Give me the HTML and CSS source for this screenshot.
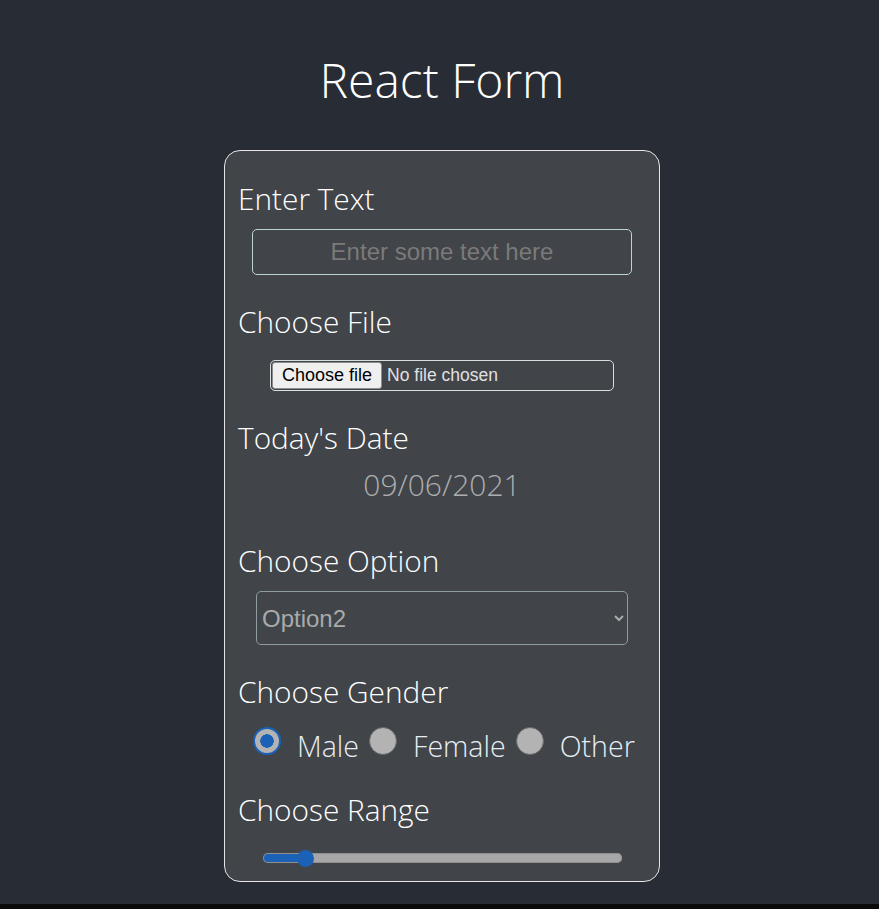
FILE: index.html
```html
<!DOCTYPE html>
<html lang="en">
<head>
<meta charset="utf-8">
<title>React Form</title>
<link rel="stylesheet" href="styles.css">
</head>
<body>
<div class="app">
  <h1 class="title">React Form</h1>
  <form class="card">
    <div class="field first">
      <label class="label" for="txt">Enter Text</label>
      <input id="txt" class="text-input" type="text" placeholder="Enter some text here">
    </div>
    <div class="field">
      <label class="label" for="file">Choose File</label>
      <label class="file-input" for="file">
        <span class="file-button">Choose file</span>
        <span class="file-name">No file chosen</span>
        <input id="file" class="file-hidden" type="file">
      </label>
    </div>
    <div class="field">
      <label class="label">Today's Date</label>
      <div class="date">09/06/2021</div>
    </div>
    <div class="field after-date">
      <label class="label">Choose Option</label>
      <select class="select">
        <option>Option1</option>
        <option selected>Option2</option>
        <option>Option3</option>
      </select>
    </div>
    <div class="field">
      <label class="label">Choose Gender</label>
      <div class="radios">
        <input class="radio" type="radio" name="g" id="m" checked>
        <label class="radio-label" for="m">Male</label>
        <input class="radio" type="radio" name="g" id="f">
        <label class="radio-label" for="f">Female</label>
        <input class="radio" type="radio" name="g" id="o">
        <label class="radio-label" for="o">Other</label>
      </div>
    </div>
    <div class="field after-radios">
      <label class="label">Choose Range</label>
      <input class="range" type="range" min="0" max="100" value="10">
    </div>
  </form>
</div>
</body>
</html>
```

FILE: styles.css
```css
html {
  background: #0a0a0a;
}
body {
  margin: 0;
  font-family: "Open Sans", "Noto Sans", sans-serif;
  font-weight: 300;
  color: #ffffff;
}
.app {
  background: #282c34;
  padding: 52px 0 22px 5px;
  display: flex;
  flex-direction: column;
  align-items: center;
}
.title {
  margin: 0 0 42px;
  font-size: 48px;
  line-height: 56px;
  font-weight: 300;
  color: #ffffff;
}
.card {
  box-sizing: border-box;
  width: 436px;
  background: #414448;
  border: 1px solid #e6e6e6;
  border-radius: 16px;
  padding: 30px 13px 14px;
  display: flex;
  flex-direction: column;
}
.field {
  display: flex;
  flex-direction: column;
  align-items: center;
  margin-top: 29px;
}
.field.first {
  margin-top: 0;
}
.field.after-date {
  margin-top: 41px;
}
.field.after-radios {
  margin-top: 29px;
}
.label {
  align-self: flex-start;
  font-size: 29.8px;
  line-height: 36px;
  font-weight: 300;
  color: #ffffff;
}
.text-input {
  box-sizing: border-box;
  margin-top: 12px;
  width: 380px;
  height: 46px;
  background: transparent;
  border: 1px solid #bcd3d3;
  border-radius: 5px;
  text-align: center;
  font-family: "Liberation Sans", Arial, sans-serif;
  font-size: 24px;
  color: #ffffff;
  outline: none;
}
.text-input::placeholder {
  color: #7a7a7a;
}
.file-input {
  box-sizing: border-box;
  margin-top: 20px;
  width: 344px;
  height: 31px;
  padding: 1px;
  display: flex;
  align-items: center;
  border: 1px solid #d6dede;
  border-radius: 5px;
  font-family: "Liberation Sans", Arial, sans-serif;
  font-size: 18px;
  cursor: pointer;
}
.file-button {
  box-sizing: border-box;
  height: 27px;
  padding: 0 9px;
  display: flex;
  align-items: center;
  color: #000000;
  background: #efefef;
  border: 1px solid #8c8c8c;
  border-radius: 3px;
}
.file-name {
  margin-left: 5px;
  font-size: 17.5px;
  color: #e0e0e0;
}
.file-hidden {
  display: none;
}
.date {
  margin-top: 12px;
  font-size: 30px;
  line-height: 34px;
  font-weight: 300;
  color: #acaeb0;
}
.select {
  box-sizing: border-box;
  margin-top: 12px;
  width: 372px;
  height: 54px;
  padding: 0 1px;
  background: transparent;
  border: 1px solid #8e9d9d;
  border-radius: 5px;
  font-family: "Liberation Sans", Arial, sans-serif;
  font-size: 24px;
  color: #a8aaab;
  outline: none;
}
.radios {
  align-self: flex-start;
  display: flex;
  align-items: flex-start;
  margin-top: 17px;
  padding-left: 15px;
}
.radio {
  appearance: none;
  -webkit-appearance: none;
  box-sizing: border-box;
  flex: none;
  width: 28px;
  height: 28px;
  margin: 0 16px 0 0;
  border-radius: 50%;
  background: #b3b3b3;
  border: 1.5px solid #666666;
}
.radio:checked {
  border: 2px solid #1b62b6;
  background: radial-gradient(circle, #1b62b6 0 6.5px, #b3b3b3 7px);
}
.radio-label {
  margin-top: 2px;
  margin-right: 10px;
  font-size: 28.6px;
  line-height: 34px;
  font-weight: 300;
  color: #e6eef4;
  white-space: nowrap;
}
.range {
  appearance: none;
  -webkit-appearance: none;
  margin: 21px 0 0;
  width: 359px;
  height: 18px;
  background: transparent;
}
.range::-webkit-slider-runnable-track {
  height: 10px;
  border-radius: 5px;
  background: linear-gradient(to right, #1b62b6 0 12%, #a7a7a7 12%);
  box-shadow: inset 0 0 0 1px #8f8f8f;
}
.range::-webkit-slider-thumb {
  -webkit-appearance: none;
  width: 17px;
  height: 17px;
  margin-top: -3.5px;
  border-radius: 50%;
  background: #1b62b6;
  border: none;
}
```
